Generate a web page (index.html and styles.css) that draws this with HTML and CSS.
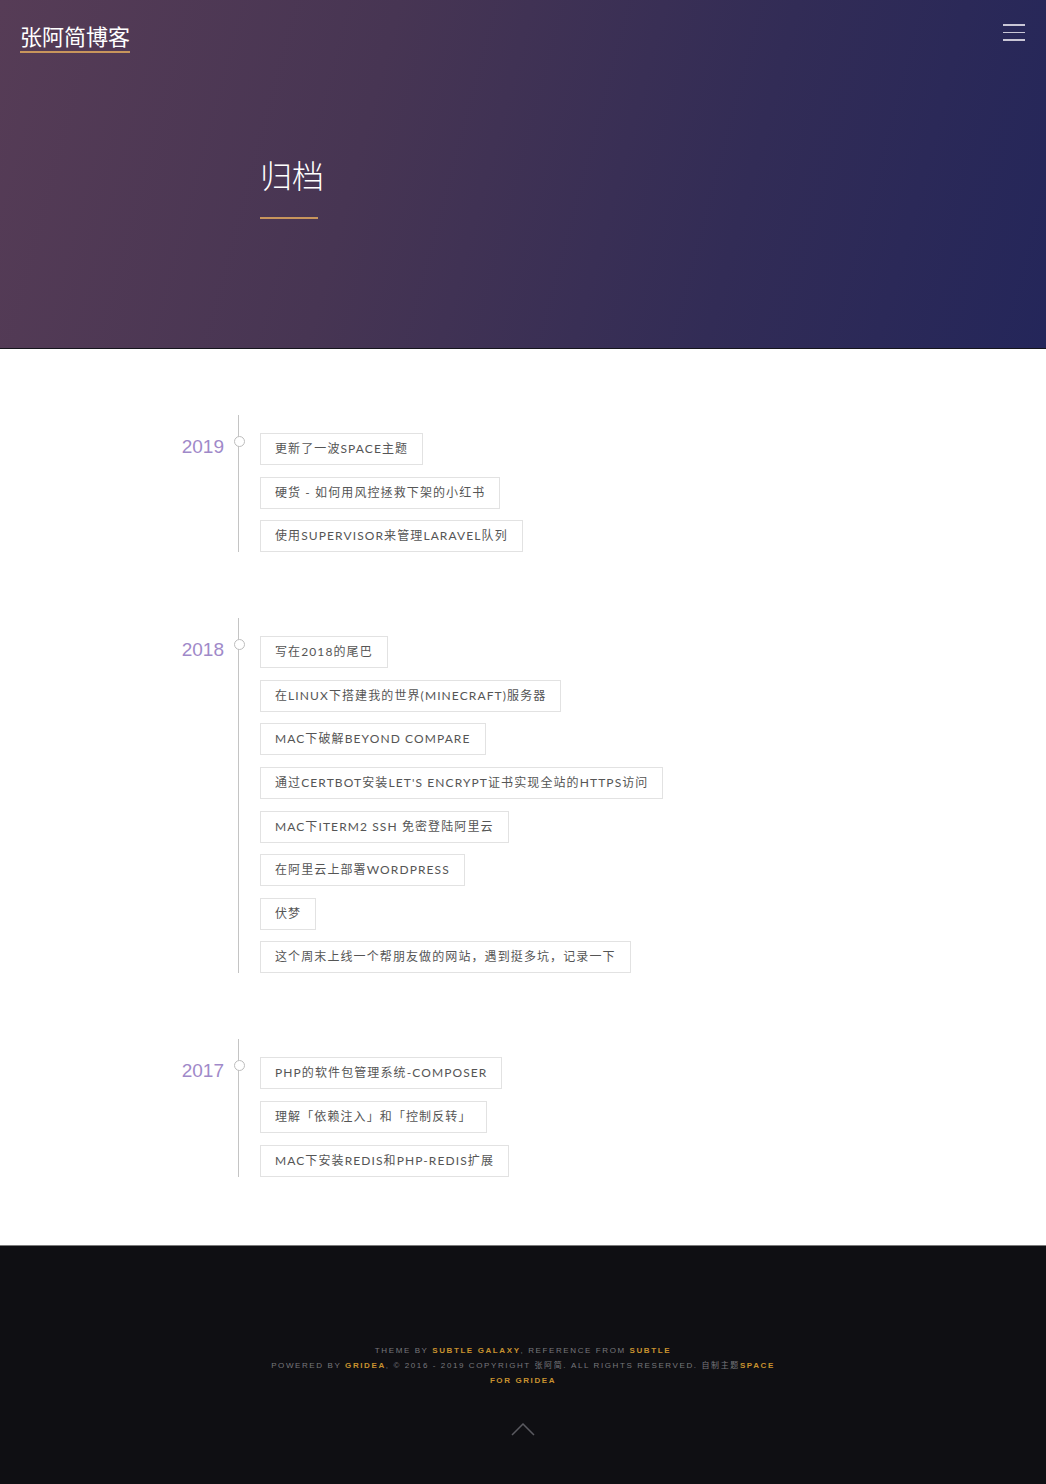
FILE: index.html
```html
<!DOCTYPE html>
<html lang="zh-CN">
<head>
<meta charset="utf-8">
<title>归档 | 张阿简博客</title>
<link rel="stylesheet" href="styles.css">
</head>
<body>
<header class="hero">
  <nav class="topbar">
    <a class="logo" href="#">张阿简博客</a>
    <button class="menu" aria-label="menu"><span></span><span></span><span></span></button>
  </nav>
  <div class="hero-title">
    <h1>归档</h1>
    <div class="hero-rule"></div>
  </div>
</header>

<main class="archive">
  <section class="year-group">
    <div class="year">2019</div>
    <ul class="posts">
      <li><a href="#">更新了一波SPACE主题</a></li>
      <li><a href="#">硬货 - 如何用风控拯救下架的小红书</a></li>
      <li><a href="#">使用SUPERVISOR来管理LARAVEL队列</a></li>
    </ul>
  </section>
  <section class="year-group">
    <div class="year">2018</div>
    <ul class="posts">
      <li><a href="#">写在2018的尾巴</a></li>
      <li><a href="#">在LINUX下搭建我的世界(MINECRAFT)服务器</a></li>
      <li><a href="#">MAC下破解BEYOND COMPARE</a></li>
      <li><a href="#">通过CERTBOT安装LET'S ENCRYPT证书实现全站的HTTPS访问</a></li>
      <li><a href="#">MAC下ITERM2 SSH 免密登陆阿里云</a></li>
      <li><a href="#">在阿里云上部署WORDPRESS</a></li>
      <li><a href="#">伏梦</a></li>
      <li><a href="#">这个周末上线一个帮朋友做的网站，遇到挺多坑，记录一下</a></li>
    </ul>
  </section>
  <section class="year-group">
    <div class="year">2017</div>
    <ul class="posts">
      <li><a href="#">PHP的软件包管理系统-COMPOSER</a></li>
      <li><a href="#">理解「依赖注入」和「控制反转」</a></li>
      <li><a href="#">MAC下安装REDIS和PHP-REDIS扩展</a></li>
    </ul>
  </section>
</main>

<footer class="footer">
  <p class="credits">
    Theme by <a href="#">Subtle Galaxy</a>, reference from <a href="#">Subtle</a><br>
    Powered by <a href="#">Gridea</a>, © 2016 - 2019 Copyright 张阿简. All rights reserved. 自制主题<a href="#">Space for Gridea</a>
  </p>
  <a class="to-top" href="#" aria-label="back to top">
    <svg width="24" height="13" viewBox="0 0 24 13"><polyline points="1,12 12,1 23,12" fill="none" stroke="#5a5a60" stroke-width="1.5"/></svg>
  </a>
</footer>
</body>
</html>
```

FILE: styles.css
```css
* { box-sizing: border-box; }
html, body { margin: 0; padding: 0; }
body {
  font-family: "Liberation Sans", "Noto Sans CJK SC", sans-serif;
  background: #fff;
  color: #555;
}
a { text-decoration: none; color: inherit; }

.hero {
  height: 349px;
  background: linear-gradient(105deg, #563c56 0%, #473553 35%, #322c56 70%, #24265a 100%);
  border-bottom: 1px solid #15151c;
}
.topbar {
  display: flex;
  justify-content: space-between;
  align-items: flex-start;
  padding: 21px 21px 0 20px;
}
.logo {
  font-family: "Noto Sans CJK SC", sans-serif;
  font-size: 22px;
  line-height: 28px;
  color: #fff;
  padding-bottom: 2px;
  border-bottom: 2px solid #c8955c;
}
.menu {
  display: flex;
  flex-direction: column;
  gap: 6px;
  width: 22px;
  padding: 3px 0 0;
  margin: 0;
  border: 0;
  background: none;
}
.menu span {
  display: block;
  height: 1.5px;
  width: 22px;
  background: #c9c6d6;
}
.hero-title {
  padding: 101px 0 0 260px;
}
.hero-title h1 {
  margin: 0;
  font-family: "Noto Sans CJK SC", sans-serif;
  font-weight: 300;
  font-size: 32px;
  line-height: 40px;
  color: #fff;
}
.hero-rule {
  width: 58px;
  height: 2px;
  margin-top: 23px;
  background: #c8955c;
}

.archive {
  display: flex;
  flex-direction: column;
  gap: 66px;
  padding: 66px 0 68px;
}
.year-group {
  display: flex;
}
.year {
  width: 238px;
  padding: 20px 14px 0 0;
  text-align: right;
  font-size: 19px;
  line-height: 23px;
  color: #9f89c9;
}
.posts {
  position: relative;
  list-style: none;
  margin: 0;
  padding: 18px 0 0 21px;
  border-left: 1px solid #c4c4c4;
  display: flex;
  flex-direction: column;
  align-items: flex-start;
  gap: 11.6px;
}
.posts::before {
  content: "";
  position: absolute;
  left: -5px;
  top: 21px;
  width: 9px;
  height: 9px;
  border-radius: 50%;
  border: 1px solid #bdbdbd;
  background: #fff;
}
.posts li a {
  display: block;
  padding: 5px 14px 5px 14px;
  line-height: 20px;
  font-family: "Lato", "Noto Sans CJK SC", sans-serif;
  font-size: 12px;
  letter-spacing: 1.1px;
  color: #555;
  border: 1px solid #e2e2e2;
}

.footer {
  background: #0f0f13;
  border-top: 1px solid #7a7a7a;
  height: 239px;
  padding-top: 97px;
  text-align: center;
}
.credits {
  margin: 0 auto;
  max-width: 522px;
  font-size: 8px;
  line-height: 15px;
  letter-spacing: 1.6px;
  text-transform: uppercase;
  color: #77777c;
}
.credits a {
  color: #c8922f;
  font-weight: bold;
}
.to-top {
  display: block;
  width: 24px;
  margin: 35px auto 0;
  line-height: 0;
}
```
